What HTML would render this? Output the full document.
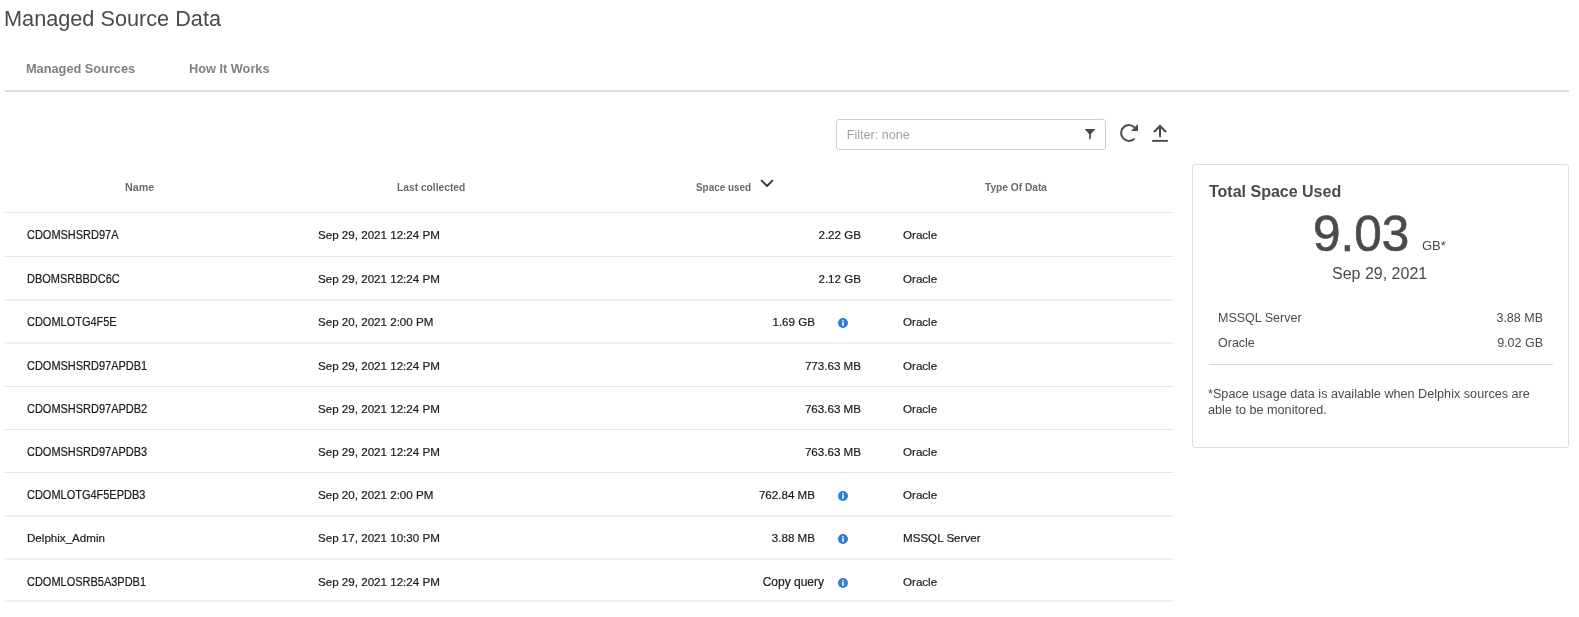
<!DOCTYPE html>
<html><head><meta charset="utf-8">
<style>
*{margin:0;padding:0;box-sizing:border-box}
html,body{width:1579px;height:617px;overflow:hidden;background:#fff;-webkit-font-smoothing:antialiased;font-family:"Liberation Sans",sans-serif;color:#222}
.abs{position:absolute;white-space:nowrap}
#title{left:4px;top:6px;font-size:21.7px;color:#4a4a4a;line-height:26px}
.tab{top:61px;font-size:12.75px;font-weight:bold;color:#808080;line-height:16px}
#tabline{left:5px;top:90px;width:1564px;height:2px;background:#dedede}
#filter{left:836px;top:119px;width:270px;height:31px;border:1px solid #c9ced6;border-radius:3px}
#filter span{position:absolute;left:9.7px;top:7px;font-size:12.6px;color:#9ca2a9;line-height:16px}
.hd{top:181px;font-size:11px;font-weight:bold;color:#6b6b6b;line-height:13px;transform-origin:0 0}
.line{position:absolute;left:5px;width:1168px;height:1px;background:#e3e3e3}
.cell{font-size:11.6px;color:#1a1a1a;line-height:14px;-webkit-text-stroke:0.2px #1a1a1a}
.nm{font-size:12px;transform:scaleX(0.915);transform-origin:0 0}
.cq{font-size:12px}
.info{position:absolute;width:10px;height:10px}
#card{left:1192px;top:164px;width:377px;height:284px;border:1px solid #dedede;border-radius:3px}
.cd{color:#4a4a4a}
</style></head><body><div id="wrap" style="position:absolute;left:0;top:0;width:1579px;height:617px;will-change:transform">
<div id="title" class="abs">Managed Source Data</div>
<div class="abs tab" style="left:26px">Managed Sources</div>
<div class="abs tab" style="left:189px">How It Works</div>
<div id="tabline" class="abs"></div>

<div id="filter" class="abs"><span>Filter: none</span>

</div>
<svg class="abs" style="left:1078px;top:122px" width="24" height="24" viewBox="1078 122 24 24"><path d="M1084.7 128.9H1095.3L1090.85 134.3V138.4L1089.15 139.4V134.3Z" fill="#4a4a4a"/></svg>
<svg class="abs" style="left:1115px;top:118px" width="60" height="30" viewBox="1115 118 60 30"><path d="M1135.05 127.9A7.9 7.9 0 1 0 1134.6 138.6" fill="none" stroke="#4a4a4a" stroke-width="2"/><path d="M1131 131L1138 124V131Z" fill="#4a4a4a"/><path d="M1160 126V137.2M1154 132L1160 126L1166 132" fill="none" stroke="#4a4a4a" stroke-width="2"/><rect x="1152.2" y="139.9" width="15.7" height="1.9" fill="#4a4a4a"/></svg>


<div class="abs hd" style="left:124.6px;transform:scaleX(0.975)">Name</div>
<div class="abs hd" style="left:397px;transform:scaleX(0.93)">Last collected</div>
<div class="abs hd" style="left:696px;transform:scaleX(0.9)">Space used</div>
<svg class="abs" style="left:755px;top:174px" width="24" height="18" viewBox="755 174 24 18"><path d="M761.6 180.6L767 186L772.4 180.6" fill="none" stroke="#333" stroke-width="1.8" stroke-linecap="round" stroke-linejoin="round"/></svg>
<div class="abs hd" style="left:985px;transform:scaleX(0.925)">Type Of Data</div>

<div id="rows">
<div class="line" style="top:212px"></div>
<div class="line" style="top:256px"></div>
<div class="line" style="top:299px;height:2px;background:#efefef"></div>
<div class="line" style="top:342px;height:2px;background:#efefef"></div>
<div class="line" style="top:386px"></div>
<div class="line" style="top:429px"></div>
<div class="line" style="top:472px"></div>
<div class="line" style="top:515px;height:2px;background:#efefef"></div>
<div class="line" style="top:558px;height:2px;background:#efefef"></div>
<div class="line" style="top:600px;height:2px;background:#efefef"></div>
<div class="abs cell nm" style="left:27px;top:228px">CDOMSHSRD97A</div>
<div class="abs cell" style="left:318px;top:228px">Sep 29, 2021 12:24 PM</div>
<div class="abs cell" style="right:718px;top:228px">2.22 GB</div>
<div class="abs cell" style="left:903px;top:228px">Oracle</div>
<div class="abs cell nm" style="left:27px;top:272px">DBOMSRBBDC6C</div>
<div class="abs cell" style="left:318px;top:272px">Sep 29, 2021 12:24 PM</div>
<div class="abs cell" style="right:718px;top:272px">2.12 GB</div>
<div class="abs cell" style="left:903px;top:272px">Oracle</div>
<div class="abs cell nm" style="left:27px;top:315px">CDOMLOTG4F5E</div>
<div class="abs cell" style="left:318px;top:315px">Sep 20, 2021 2:00 PM</div>
<div class="abs cell" style="right:764px;top:315px">1.69 GB</div>
<svg class="info" style="left:838px;top:318px" viewBox="0 0 10 10"><circle cx="5" cy="5" r="5" fill="#2f7fd8"/><rect x="4.15" y="2.1" width="1.7" height="1.3" fill="#e8f0fb"/><rect x="4.15" y="3.9" width="1.7" height="3.9" fill="#e8f0fb"/></svg>
<div class="abs cell" style="left:903px;top:315px">Oracle</div>
<div class="abs cell nm" style="left:27px;top:359px">CDOMSHSRD97APDB1</div>
<div class="abs cell" style="left:318px;top:359px">Sep 29, 2021 12:24 PM</div>
<div class="abs cell" style="right:718px;top:359px">773.63 MB</div>
<div class="abs cell" style="left:903px;top:359px">Oracle</div>
<div class="abs cell nm" style="left:27px;top:402px">CDOMSHSRD97APDB2</div>
<div class="abs cell" style="left:318px;top:402px">Sep 29, 2021 12:24 PM</div>
<div class="abs cell" style="right:718px;top:402px">763.63 MB</div>
<div class="abs cell" style="left:903px;top:402px">Oracle</div>
<div class="abs cell nm" style="left:27px;top:445px">CDOMSHSRD97APDB3</div>
<div class="abs cell" style="left:318px;top:445px">Sep 29, 2021 12:24 PM</div>
<div class="abs cell" style="right:718px;top:445px">763.63 MB</div>
<div class="abs cell" style="left:903px;top:445px">Oracle</div>
<div class="abs cell nm" style="left:27px;top:488px">CDOMLOTG4F5EPDB3</div>
<div class="abs cell" style="left:318px;top:488px">Sep 20, 2021 2:00 PM</div>
<div class="abs cell" style="right:764px;top:488px">762.84 MB</div>
<svg class="info" style="left:838px;top:491px" viewBox="0 0 10 10"><circle cx="5" cy="5" r="5" fill="#2f7fd8"/><rect x="4.15" y="2.1" width="1.7" height="1.3" fill="#e8f0fb"/><rect x="4.15" y="3.9" width="1.7" height="3.9" fill="#e8f0fb"/></svg>
<div class="abs cell" style="left:903px;top:488px">Oracle</div>
<div class="abs cell" style="left:27px;top:531px">Delphix_Admin</div>
<div class="abs cell" style="left:318px;top:531px">Sep 17, 2021 10:30 PM</div>
<div class="abs cell" style="right:764px;top:531px">3.88 MB</div>
<svg class="info" style="left:838px;top:534px" viewBox="0 0 10 10"><circle cx="5" cy="5" r="5" fill="#2f7fd8"/><rect x="4.15" y="2.1" width="1.7" height="1.3" fill="#e8f0fb"/><rect x="4.15" y="3.9" width="1.7" height="3.9" fill="#e8f0fb"/></svg>
<div class="abs cell" style="left:903px;top:531px">MSSQL Server</div>
<div class="abs cell nm" style="left:27px;top:575px">CDOMLOSRB5A3PDB1</div>
<div class="abs cell" style="left:318px;top:575px">Sep 29, 2021 12:24 PM</div>
<div class="abs cell cq" style="right:755px;top:575px">Copy query</div>
<svg class="info" style="left:838px;top:578px" viewBox="0 0 10 10"><circle cx="5" cy="5" r="5" fill="#2f7fd8"/><rect x="4.15" y="2.1" width="1.7" height="1.3" fill="#e8f0fb"/><rect x="4.15" y="3.9" width="1.7" height="3.9" fill="#e8f0fb"/></svg>
<div class="abs cell" style="left:903px;top:575px">Oracle</div>
</div><!--rows-->

<div id="card" class="abs"></div>
<div class="abs cd" style="left:1209px;top:183px;font-size:16px;font-weight:bold;line-height:18px">Total Space Used</div>
<div class="abs cd" style="left:1313px;top:208.5px;font-size:49.5px;line-height:50px;-webkit-text-stroke:0.6px #4a4a4a">9.03</div>
<div class="abs cd" style="left:1422px;top:239px;font-size:13px;line-height:14px">GB*</div>
<div class="abs cd" style="left:1332px;top:265px;font-size:16px;line-height:18px">Sep 29, 2021</div>
<div class="abs cd" style="left:1218px;top:311px;font-size:12.5px;line-height:15px">MSSQL Server</div>
<div class="abs cd" style="right:36px;top:311px;font-size:12.5px;line-height:15px">3.88 MB</div>
<div class="abs cd" style="left:1218px;top:336px;font-size:12.5px;line-height:15px">Oracle</div>
<div class="abs cd" style="right:36px;top:336px;font-size:12.5px;line-height:15px">9.02 GB</div>
<div class="abs" style="left:1209px;top:364px;width:344px;height:1px;background:#d8d8d8"></div>
<div class="abs cd" style="left:1208px;top:386px;font-size:12.65px;line-height:16px;white-space:normal;width:345px">*Space usage data is available when Delphix sources are able to be monitored.</div>
</div></body></html>
